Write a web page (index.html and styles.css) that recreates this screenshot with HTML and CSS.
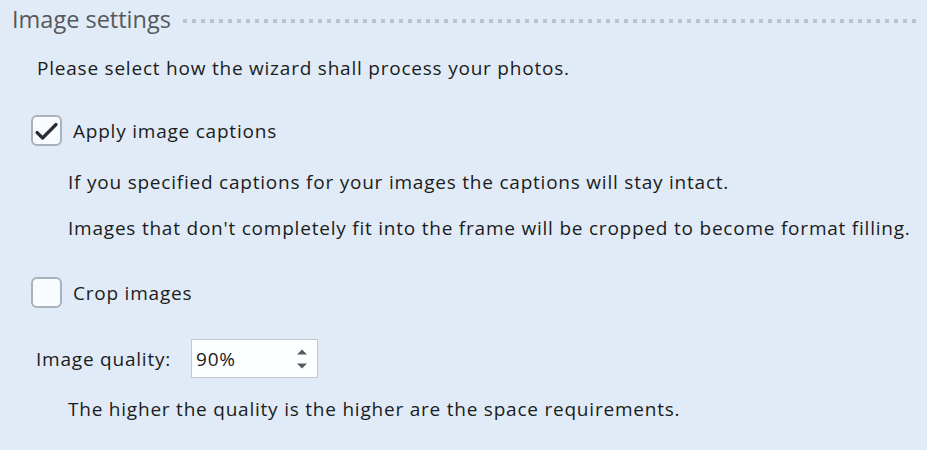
FILE: index.html
```html
<!DOCTYPE html>
<html>
<head>
<meta charset="utf-8">
<link rel="stylesheet" href="styles.css">
</head>
<body>
<section class="group">
  <header class="group-head">
    <span class="group-title">Image settings</span>
    <span class="group-rule"></span>
  </header>
  <div class="group-body">
    <p class="intro">Please select how the wizard shall process your photos.</p>

    <label class="check check-first">
      <span class="box">
        <svg viewBox="0 0 31 31" width="31" height="31"><path d="M6 17.5 L11.6 23 L25 9.5" fill="none" stroke="#2a2d33" stroke-width="3.2" stroke-linecap="round" stroke-linejoin="round"/></svg>
      </span>
      <span class="check-label">Apply image captions</span>
    </label>
    <p class="note note-first">If you specified captions for your images the captions will stay intact.</p>
    <p class="note">Images that don't completely fit into the frame will be cropped to become format filling.</p>

    <label class="check check-second">
      <span class="box"></span>
      <span class="check-label">Crop images</span>
    </label>

    <div class="quality">
      <span class="quality-label">Image quality:</span>
      <div class="spin">
        <span class="spin-value">90%</span>
        <span class="spin-arrows">
          <svg viewBox="0 0 10 20" width="10" height="20"><path d="M0 5.5 L5 0.5 L10 5.5 Z" fill="#555a60"/><path d="M0 14.5 L10 14.5 L5 19.5 Z" fill="#555a60"/></svg>
        </span>
      </div>
    </div>
    <p class="note note-last">The higher the quality is the higher are the space requirements.</p>
  </div>
</section>
</body>
</html>
```
FILE: styles.css
```css
html, body {
  margin: 0;
  padding: 0;
  background: #e1ebf7;
}
body {
  width: 927px;
  height: 450px;
  overflow: hidden;
  font-family: "Open Sans", "Noto Sans", sans-serif;
  color: #1a1c20;
}
p { margin: 0; }

.group-head {
  display: flex;
  align-items: center;
  height: 38px;
  padding: 0 10px 0 12px;
}
.group-title {
  font-size: 23.5px;
  color: #56585c;
  line-height: 38px;
  white-space: nowrap;
}
.group-rule {
  flex: 1;
  height: 4px;
  margin: 4px 0 0 12px;
  background: repeating-linear-gradient(to right, #b9c3ce 0 4px, transparent 4px 9px);
}

.group-body {
  font-size: 19px;
  letter-spacing: 0.78px;
  line-height: 30px;
}
.intro {
  margin: 15px 0 0 37px;
}
.check {
  display: flex;
  align-items: center;
  margin-left: 31px;
  height: 31px;
}
.check-first { margin-top: 32px; }
.check-second { margin-top: 34px; }
.box {
  box-sizing: border-box;
  width: 31px;
  height: 31px;
  border: 2px solid #a9b1bc;
  border-radius: 6px;
  background: #f9fcff;
  position: relative;
  flex: none;
}
.box svg {
  position: absolute;
  left: -2px;
  top: -2px;
}
.check-label {
  margin-left: 11px;
}
.note {
  margin-left: 68px;
  margin-top: 16px;
}
.note-first { margin-top: 21px; }
.note-last { margin-top: 16px; }

.quality {
  display: flex;
  align-items: center;
  margin: 31px 0 0 36px;
  height: 39px;
}
.quality-label {
  width: 155px;
}
.spin {
  box-sizing: border-box;
  width: 127px;
  height: 39px;
  border: 1px solid #c3c8cf;
  background: #fdfeff;
  display: flex;
  align-items: center;
  justify-content: space-between;
  padding: 0 10px 0 4px;
}
.spin-arrows {
  display: flex;
  margin-top: 1px;
}
.spin-arrows svg { display: block; }
```
